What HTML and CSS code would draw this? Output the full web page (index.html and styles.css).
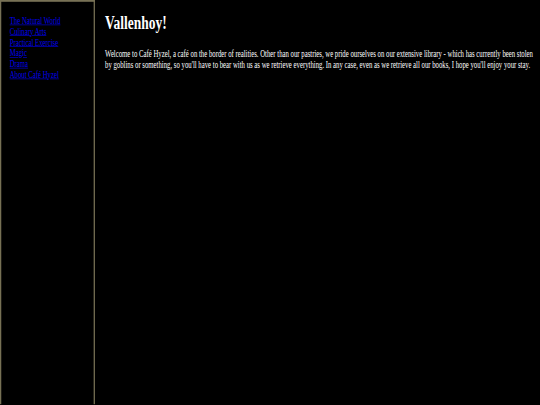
FILE: index.html
```
<!DOCTYPE html>
<html lang="en">
<head>
<meta charset="utf-8">
<title>Vallenhoy!</title>
<link rel="stylesheet" href="styles.css">
</head>
<body>
<div class="page">
  <aside class="sidebar">
    <nav class="nav">
      <a href="#">The Natural World</a>
      <a href="#">Culinary Arts</a>
      <a href="#">Practical Exercise</a>
      <a href="#">Magic</a>
      <a href="#">Drama</a>
      <a href="#">About Café Hyzel</a>
    </nav>
  </aside>
  <main class="content">
    <h1 class="title">Vallenhoy!</h1>
    <p class="intro">Welcome to Café Hyzel, a café on the border of realities. Other than our pastries, we pride ourselves on our extensive library - which has currently been stolen by goblins or something, so you'll have to bear with us as we retrieve everything. In any case, even as we retrieve all our books, I hope you'll enjoy your stay.</p>
  </main>
</div>
</body>
</html>
```

FILE: styles.css
```
html, body {
  margin: 0;
  padding: 0;
  background: #000;
  overflow: hidden;
  width: 540px;
  height: 405px;
}

.page {
  width: 1278px;
  height: 674px;
  display: flex;
  align-items: stretch;
  font-family: "Liberation Serif", "Times New Roman", serif;
  font-size: 16px;
  color: #fff;
  background: #000;
  transform: scale(0.421875, 0.6);
  transform-origin: 0 0;
  overflow: hidden;
}

.sidebar {
  box-sizing: border-box;
  flex: 0 0 225px;
  border: 3px solid #777155;
  border-bottom: none;
  padding: 22.5px 10px 0 20px;
}

.nav {
  display: flex;
  flex-direction: column;
  line-height: 18px;
}

.nav a {
  color: #0000ee;
  text-decoration: underline;
}

.content {
  flex: 1;
  min-width: 0;
  padding: 19px 6px 0 24px;
}

.title {
  margin: 0 0 25px;
  font-size: 32px;
  font-weight: bold;
  color: #fff;
}

.intro {
  margin: 0;
  color: #fff;
}
```
